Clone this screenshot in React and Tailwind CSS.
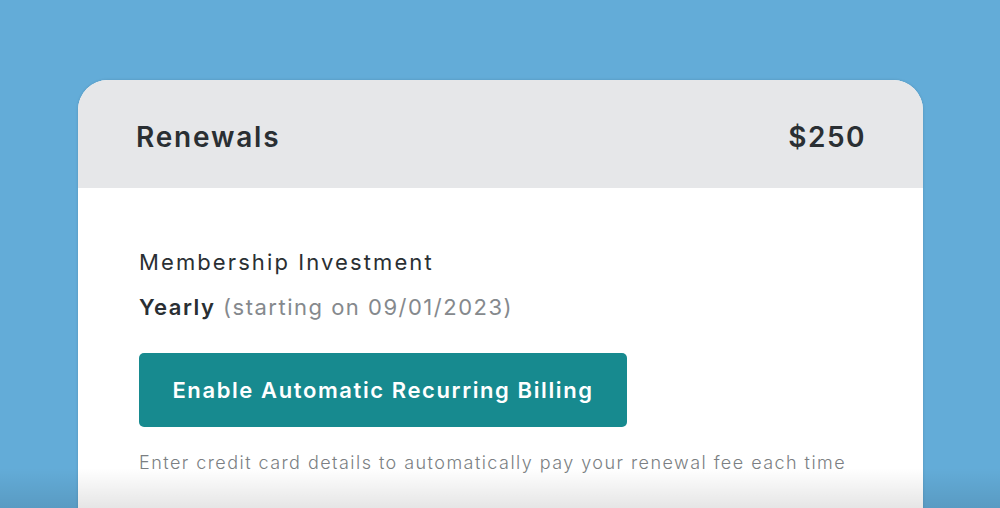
import React from 'react';

const App = () => {
  return (
    <div
      className="relative h-[508px] w-[1000px] overflow-hidden bg-[#63acd8]"
      style={{ fontFamily: 'Inter, "Noto Sans", sans-serif' }}
    >
      <div className="pt-[80px] pl-[78px]">
        {/* Card */}
        <div className="w-[845px] overflow-hidden rounded-t-[30px] bg-white shadow-[0_0_3px_rgba(0,0,0,0.15)]">
          {/* Header */}
          <div className="flex h-[108px] items-center justify-between bg-[#e6e7e9] pl-[58px] pr-[57px] pt-[6px] text-[#2a2f33]">
            <span className="text-[28px] font-semibold tracking-[1.8px]">Renewals</span>
            <span className="text-[28px] font-semibold tracking-[1.5px]">$250</span>
          </div>

          {/* Body */}
          <div className="pl-[61px] pt-[59px] pb-[40px]">
            <div className="text-[22px] leading-[30px] tracking-[2.1px] text-[#2a2f33]">Membership Investment</div>
            <div className="mt-[15px] text-[22px] leading-[30px] tracking-[1.5px]">
              <span className="font-semibold text-[#2a2f33]">Yearly</span>{' '}
              <span className="text-[#85898d]">(starting on 09/01/2023)</span>
            </div>
            <button className="mt-[31px] flex h-[74px] w-[488px] items-center justify-center rounded-[5px] bg-[#178a8f] text-[22px] font-semibold tracking-[1.6px] text-white">
              Enable Automatic Recurring Billing
            </button>
            <div className="mt-[22px] text-[18px] font-light tracking-[1.45px] text-[#7b7f83]">
              Enter credit card details to automatically pay your renewal fee each time
            </div>
          </div>
        </div>
      </div>

      {/* bottom fade */}
      <div className="pointer-events-none absolute bottom-0 left-0 h-[40px] w-full bg-gradient-to-b from-transparent to-black/10" />
    </div>
  );
};

export default App;
